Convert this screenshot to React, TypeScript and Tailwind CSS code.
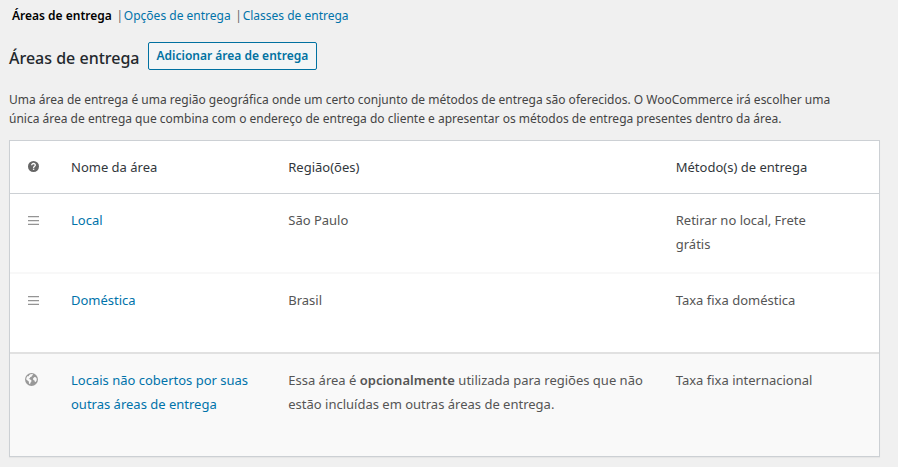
import type { ReactNode } from "react";

function MenuIcon() {
  return (
    <svg width="11" height="9" viewBox="0 0 11 9" className="mx-auto block" aria-hidden="true">
      <path d="M0 0h11v1.3H0zM0 3.9h11v1.3H0zM0 7.7h11v1.3H0z" fill="#949494" />
    </svg>
  );
}

function HelpIcon() {
  return (
    <svg width="11" height="11" viewBox="0 0 11 11" className="mx-auto block" role="img" aria-label="Ajuda">
      <circle cx="5.5" cy="5.5" r="5.5" fill="#666" />
      <path d="M3.7 4.2C3.7 1.9 7.4 2 7.3 4.2C7.3 5.4 5.6 5.3 5.6 6.9" fill="none" stroke="#fff" strokeWidth="1.3" />
      <path d="M4.9 7.6h1.4v1.3H4.9z" fill="#fff" />
    </svg>
  );
}

function GlobeIcon() {
  return (
    <svg width="13" height="13" viewBox="0 0 13 13" className="block" aria-hidden="true">
      <circle cx="6.5" cy="6.5" r="6.5" fill="#999" />
      <path
        d="M5.4 1.2L7.6 1L8 2L6.8 2.7L6.6 3.8L5.3 4.1L4.9 5.3L3.6 5.7L5.3 6.4L6.5 7.6L6.2 9L5.4 9.7L5.1 11.3L4 10.4L3.8 8.6L2.6 7.4L1.4 6.8L1.3 5.2L2.2 3.3L3.7 3.2L4.3 2ZM9.4 3.9L10.8 4.2L11.8 5.8L11.6 7.6L10.6 9.1L9.8 8.8L9.5 7.4L8.3 6.9L8 5.5Z"
        fill="#f9f9f9"
      />
    </svg>
  );
}

function ZoneRow({ icon, name, region, methods }: { icon: ReactNode; name: string; region: string; methods: string }) {
  return (
    <tr className="h-20 border-b-2 border-[#f8f8f8] align-top last:border-[#e1e1e1]">
      <td className="py-[22px]">{icon}</td>
      <td className="p-3.5">
        <a href="#" className="text-[#0073aa]">{name}</a>
      </td>
      <td className="p-3.5">{region}</td>
      <td className="py-3.5 pr-14 pl-3.5">{methods}</td>
    </tr>
  );
}

export default function App() {
  return (
    <main className="min-h-screen bg-[#f0f0f0] pt-1.5 pr-[18px] pb-2.5 pl-[9px] font-['Noto_Sans',sans-serif] text-[#444]">
      <nav className="flex gap-1 pl-[3px] text-xs leading-5">
        <a href="#" className="font-semibold text-black">Áreas de entrega</a>
        <span className="flex">
          <span className="w-2 text-center text-[#666]">|</span>
          <a href="#" className="text-[#0073aa]">Opções de entrega</a>
        </span>
        <span className="flex">
          <span className="w-2 text-center text-[#666]">|</span>
          <a href="#" className="text-[#0073aa]">Classes de entrega</a>
        </span>
      </nav>

      <div className="mt-4 flex items-center gap-2">
        <h2 className="text-base leading-8 font-medium text-[#23282d]">Áreas de entrega</h2>
        <button type="button" className="mb-1 h-7 rounded-[2px] border border-[#0071a1] bg-[#f3f5f6] px-2 text-xs font-semibold text-[#0071a1]">
          Adicionar área de entrega
        </button>
      </div>

      <p className="mt-4 max-w-[850px] text-xs leading-[19px]">
        Uma área de entrega é uma região geográfica onde um certo conjunto de métodos de entrega são oferecidos. O
        WooCommerce irá escolher uma única área de entrega que combina com o endereço de entrega do cliente e apresentar
        os métodos de entrega presentes dentro da área.
      </p>

      <div className="mt-3 border border-[#ccd0d4] bg-white shadow-[0_1px_1px_rgba(0,0,0,0.04)]">
        <table className="w-full table-fixed border-collapse text-left text-[13px] leading-6 text-[#555]">
          <colgroup>
            <col className="w-[47px]" />
            <col className="w-1/4" />
            <col />
            <col className="w-1/4" />
          </colgroup>
          <thead>
            <tr className="h-[52px] border-b border-[#ccd0d4] text-[#32373c]">
              <th><HelpIcon /></th>
              <th className="px-3.5 font-normal">Nome da área</th>
              <th className="px-3.5 font-normal">Região(ões)</th>
              <th className="px-3.5 font-normal">Método(s) de entrega</th>
            </tr>
          </thead>
          <tbody>
            <ZoneRow icon={<MenuIcon />} name="Local" region="São Paulo" methods="Retirar no local, Frete grátis" />
            <ZoneRow icon={<MenuIcon />} name="Doméstica" region="Brasil" methods="Taxa fixa doméstica" />
          </tbody>
          <tfoot>
            <tr className="h-[103px] bg-[#f9f9f9] align-top">
              <td className="px-[15px] py-[19px]"><GlobeIcon /></td>
              <td className="p-3.5">
                <a href="#" className="text-[#0073aa]">Locais não cobertos por suas outras áreas de entrega</a>
              </td>
              <td className="p-3.5">
                Essa área é <strong className="font-semibold">opcionalmente</strong> utilizada para regiões que não estão
                incluídas em outras áreas de entrega.
              </td>
              <td className="p-3.5">Taxa fixa internacional</td>
            </tr>
          </tfoot>
        </table>
      </div>
    </main>
  );
}
